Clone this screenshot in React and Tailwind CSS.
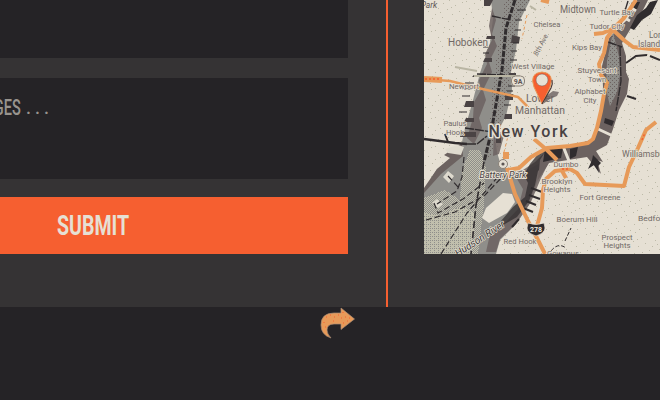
const labels = [
  // text, x (centre), y (baseline), size, width
  ["Hoboken", 468, 46, 11, 40],
  ["Midtown", 578, 13, 10, 36],
  ["Turtle Bay", 617, 15, 8, 35],
  ["Chelsea", 547, 27, 8, 27],
  ["Tudor City", 607, 29, 8, 35],
  ["Kips Bay", 587, 50, 8, 30],
  ["Long", 658, 38, 8.5, 18],
  ["Island", 649, 47, 8.5, 22],
  ["West Village", 533, 69, 8, 43],
  ["Stuyvesant", 597, 73, 8, 39],
  ["Town", 597, 82, 8, 18],
  ["Alphabet", 590, 94, 8, 31],
  ["City", 590, 103, 8, 13],
  ["Newport", 464, 89, 8, 30],
  ["Paulus", 455, 126, 7.5, 23],
  ["Hook", 455, 135, 7.5, 18],
  ["Lower", 540, 102, 10.5, 28],
  ["Manhattan", 540, 114, 10.5, 50],
  ["Williamsburg", 647, 157, 8.5, 50],
  ["Dumbo", 566, 167, 8, 25],
  ["Brooklyn", 557, 184, 8, 31],
  ["Heights", 557, 192, 8, 27],
  ["Fort Greene", 600, 200, 8, 41],
  ["Boerum Hill", 577, 222, 8, 41],
  ["Bedford", 653, 221, 8, 30],
  ["Prospect", 617, 240, 8, 31],
  ["Heights", 617, 248, 8, 27],
  ["Gowanus", 563, 256, 8, 32],
  ["Red Hook", 520, 244, 8, 33],
];

function CityMap() {
  return (
    <svg className="block h-[254px] w-[236px] shrink-0" viewBox="424 0 236 254" fontFamily="Roboto, sans-serif">
      <defs>
        <pattern id="grain" width="31" height="29" patternUnits="userSpaceOnUse">
          <path d="M1 1h1v1h-1zM9 3h1v1h-1zM4 8h1v1h-1zM15 0h1v1h-1zM21 5h1v1h-1zM28 2h1v1h-1zM13 9h1v1h-1zM25 11h1v1h-1zM1 14h1v1h-1zM8 17h1v1h-1zM18 14h1v1h-1zM29 18h1v1h-1zM14 21h1v1h-1zM22 20h1v1h-1zM4 23h1v1h-1zM10 27h1v1h-1zM19 26h1v1h-1zM27 25h1v1h-1zM17 7h1v1h-1zM6 12h1v1h-1z" fill="#bdbaa8" />
        </pattern>
        <pattern id="water" width="4" height="4" patternUnits="userSpaceOnUse">
          <path d="M0 0h1v1H0zM2 2h1v1H2z" fill="#6c6260" />
        </pattern>
        <pattern id="shore" width="2" height="2" patternUnits="userSpaceOnUse">
          <path d="M0 0h1v1H0zM1 1h1v1H1z" fill="#c1bfad" />
        </pattern>
        <pattern id="shallow" width="4" height="4" patternUnits="userSpaceOnUse">
          <path d="M0 0h4v4H0z" fill="#c1bfad" />
          <path d="M0 0h1v1H0zM2 2h1v1H2zM2 0h1v1H2z" fill="#8f8e8a" />
        </pattern>
      </defs>
      <rect x="424" width="236" height="254" fill="#e6e0d4" />
      <rect x="424" width="236" height="254" fill="url(#grain)" shapeRendering="crispEdges" />

      {/* Hudson river and the harbour */}
      <path d="M491 0H530L519 22L516 50L511 72L512 90L506 116L495 137L497 152L501 166L520 174L546 160L537 182L529 205L515 225L500 240L496 254H424V190L437 169L456 155L462 142L465 128L472 104L480 73L490 43L493 19Z" fill="#8f8e8a" />
      <path d="M424 198L445 190L460 200L462 170L470 150H480L486 168L484 205L478 254H424Z" fill="url(#shore)" shapeRendering="crispEdges" />
      <path d="M424 213L440 216L462 206L476 215L470 254H424Z" fill="url(#shallow)" shapeRendering="crispEdges" />
      <path d="M505 0H530L516 26L511 72L499 137L488 160L492 90Z" fill="url(#water)" shapeRendering="crispEdges" />
      <path d="M424 188L437 169L450 158L444 155L462 143L463 156L441 174L424 193Z" fill="#6c6260" />
      <path d="M492 8l4 12-4 14 5 12-8 16 3 10-9 18 3 10-7 18 3 10-8 16-7-6 6-20 1-16 7-12-2-10 8-16-2-10 7-14-3-14z" fill="#6c6260" opacity=".85" />
      <path d="M505 132l-6 22-6 2 1-24zM503 176l20-6 12-8 14-14 2 10-10 20-10 24-15 22-16 15-4 13-10 0 4-18 16-12 12-13 5-20-6-10z" fill="#6c6260" opacity=".85" />
      <path d="M530 164l8-10 13-7-3 14-10 10-3 14-6 16-12 16-14 8-2-4 12-14 12-10 3-14-4-8z" fill="#302c2e" opacity=".75" />
      <path d="M484 0h9l-3 6h-6zM487 36h8v3h-9zM485 58h7v4h-9zM474 75h10v2h-12zM466 101h8v6h-10zM466 118h8v4h-10zM461 132h15v5h-16zM512 35l8 2-1 6h-8zM509 73h7v4h-8zM505 94h8v6h-8zM505 114h7v5h-8zM496 134h5v9h-5z" fill="#4a4344" />

      {/* East river */}
      <path d="M648 0L641 14L631 28L622 43L626 56V72L629 79L627 94L619 110L613 129L607 145L596 151L603 162L597 160L601 174L587 157L568 160L549 163L538 180L540 160L547 149L571 146L594 139L601 117L603 87L602 66L609 38L628 19L637 0Z" fill="#6c6260" />
      <path d="M613 32L619 57L620 74L617 92L610 106L606 89L607 61Z" fill="#8f8e8a" />
      <path d="M613 32L619 57L620 74L617 92L610 106L606 89L607 61Z" fill="url(#water)" shapeRendering="crispEdges" />
      <path d="M632 2h8l-3 7-8 1zM650 2l8-2-7 14-9 6-8 10-4-2 7-13 9-7zM605 118l9 3-2 5-8-3zM545 149l18-1-2 10-18 4zM570 149l8-2-2 9-6 3zM593 155l8 8-3 3 1 7-5-8-6 4 4-9z" fill="#302c2e" />
      <path d="M630 7l6 4M623 17l7 4M598 129l15 7M563 146l6 15" stroke="#e6e0d4" strokeWidth="3" />

      {/* Governors, Liberty and Ellis islands */}
      <path d="M503 193l9 1 3 8-8 11-18 10-7-5 4-10z" fill="#e6e0d4" />
      <path d="M443 177l5-6 6 5-5 7zM432 203l5-4 6 5-5 4zM445 149l13-4 6 2-3 8-13-2z" fill="#dedace" />

      {/* Boundaries, ferries and tunnels */}
      <g fill="none" stroke="#302c2e">
        <path d="M515 0L506 28L502 70L491 133L484 162" strokeWidth="3" strokeDasharray="6 1.5" />
        <path d="M484 162L476 205L471 254" strokeWidth="1.6" strokeDasharray="7 3" />
        <path d="M424 139l31 4 12 1" strokeWidth="2.6" />
        <path d="M492 16l19 4M477 74l28 1M467 144l10 0 10-8M465 128l28 4M628 1l-8 26M608 42l14 5M620 47l1 34-5 30" strokeWidth="1.4" strokeDasharray="9 1" />
        <path d="M426 220L455 212L485 195L506 173M464 157l-2 20-5 14-20 13M441 254l26-41 35-41M448 176l11 12M434 203l4 10 25-14 21-16" strokeWidth="1.2" strokeDasharray="6 3" />
        <path d="M626 63l10-7 11-1M650 56l10 4M627 96l9 3M445 134l3 8" strokeWidth="2" />
        <path d="M531 188l11 4M529 195l11 4M526 201l10 4M523 208l10 4M512 227l7-8" strokeWidth="2" />
        <path d="M517 10h9M515 20h7M515 30h6M513 43h6M511 51h6M510 60h7M508 86h7M507 91h6M504 105h7M474 83h-9M472 89h-8M470 96h-8M467 112h-8M488 47h-5M489 53h-6" strokeWidth="1" />
        <path d="M551 251q7-9 15-3M565 241l6-13" strokeWidth="1" strokeDasharray="4 2" />
      </g>
      <path d="M474 76h46M455 67l22 4M530 6l6 4" stroke="#b9b5a3" strokeWidth="2" fill="none" />

      {/* Main roads */}
      <g className="fill-none stroke-[#e79a59]" strokeWidth="4" strokeLinejoin="round">
        <path d="M424 79L450 81L478 88L518 97L527 106" strokeWidth="2.5" />
        <path d="M424 79l18 1" strokeWidth="6" />
        <path d="M636 0L624 18L614 28L607 38L604 53L599 64L601 75L607 83L604 94L601 111L597 128L593 139L588 143L570 146L547 148L531 157L519 168L508 170" />
        <path d="M594 34l9-1 9-4 13 12 8 6 27 3M541 0l8 2" />
        <path d="M507 168L515 194L528 221L539 242L545 254M537 226L542 208L543 190L546 179L555 171L570 169L577 173L585 184L624 186L629 167L638 148L646 130L656 122M534 139l13 11 10 10" />
        <path d="M561 169l5 9" />
      </g>
      <path d="M519 97l10 10M509 132l-5 20M527 15l-5 24" stroke="#e79a59" strokeWidth="1" strokeDasharray="3 3" />
      <path d="M506 152v7" stroke="#e79a59" strokeWidth="6" />
      <circle cx="503" cy="164" r="4.5" fill="#e6e0d4" stroke="#8b8278" />
      <circle cx="503" cy="164" r="1.6" fill="#5d5654" />
      <path d="M425 79h14M642 140l3-7M562 169h8" stroke="#f65f30" strokeWidth="1.5" strokeDasharray="2 2" />

      <g fill="#716965" textAnchor="middle" stroke="#e6e0d4" strokeWidth="1.4" paintOrder="stroke" strokeLinejoin="round">
        {labels.map(([text, x, y, size, width]) => (
          <text key={text + y} x={x} y={y} fontSize={size} textLength={width} lengthAdjust="spacingAndGlyphs">{text}</text>
        ))}
        <text x="429" y="8" fontSize="8.5" fontStyle="italic" fill="#5d5654">Park</text>
        <text x="541" y="47" fontSize="7" transform="rotate(-62 541 45)">8th Ave</text>
        <text x="503" y="178" fontSize="8.5" fontStyle="italic" fill="#4b4445" strokeWidth="2" textLength="47" lengthAdjust="spacingAndGlyphs">Battery Park</text>
        <text x="480" y="242" fontSize="10" fontStyle="italic" fill="#3b3637" textLength="57" lengthAdjust="spacingAndGlyphs" transform="rotate(-33 480 239)">Hudson River</text>
        <text x="528" y="137" fontSize="16" fontWeight="500" fill="#484243" strokeWidth="3" textLength="79">New York</text>
      </g>

      <rect x="511.500" y="76" width="13" height="10" rx="4" fill="#e6e0d4" stroke="#8b8278" />
      <text x="518" y="84" fontSize="7" fontWeight="700" textAnchor="middle" fill="#5d5654">9A</text>
      <path d="M528 223q8 3 16 0l1 5q0 5-9 8q-9-3-9-8z" fill="#302c2e" stroke="#e6e0d4" strokeWidth=".7" />
      <text x="536" y="232" fontSize="7" fontWeight="700" textAnchor="middle" fill="#f4eee2">278</text>

      <path d="M543 104l3-8 7-5 6 1-2 4-7 3z" fill="#6c6260" opacity=".8" />
      <path d="M542 104L534 87q-5-14 8-15q13 1 8 15Z" fill="#f65f30" stroke="#e79a59" strokeWidth="1" />
      <path d="M542 104L551 88q2-4 1-8" fill="none" stroke="#4a3937" strokeWidth="1.2" />
      <circle cx="542" cy="80" r="6" fill="#e6e0d4" stroke="#6c6260" strokeWidth=".5" />
    </svg>
  );
}

export default function App() {
  return (
    <div className="flex h-[400px] w-[660px] flex-col overflow-hidden bg-[#252326] font-['Roboto',sans-serif]">
      <main className="flex h-[307px] shrink-0 bg-[#353334]">
        <form className="flex w-[348px] shrink-0 flex-col">
          <div className="h-[58px] shrink-0 bg-[#252326]" />
          <div className="mt-5 h-[101px] shrink-0 bg-[#252326] pt-[18px]">
            <div className="flex w-[49px] justify-end text-[22px] leading-6 font-medium text-[#99948e]">
              <span className="-mr-0.5 origin-right scale-x-[.66]">GES</span>
              <span className="ml-[7px] flex w-[23px] shrink-0 justify-between text-[18px]">
                <span>.</span>
                <span>.</span>
                <span>.</span>
              </span>
            </div>
          </div>
          <button type="button" className="mt-[18px] flex h-[57px] shrink-0 items-center bg-[#f65f30] pt-0.5 pl-[56.5px]">
            <span className="origin-left scale-x-[.725] text-[27px] leading-none font-bold text-[#e6e0d4]">SUBMIT</span>
          </button>
        </form>
        <div className="ml-[38px] w-0.5 shrink-0 bg-[#f65f30]" />
        <section className="ml-9">
          <CityMap />
        </section>
      </main>
      <footer className="pl-[320px]">
        <svg className="block h-8 w-9" viewBox="320 307 36 32">
          <path d="M341 308L354.500 319L341 329.500V324H334Q327 324 327 330Q327 334 331 338Q321 335 321 325Q321 313 334 313H341Z" fill="#e79a59" stroke="#a98c75" strokeWidth=".7" />
          <path d="M324 322v1M326 317h1M330 315h1M334 317h1M338 315h1M343 312v1M345 317h1M349 318h1M347 321h1M343 323h1M333 321h1M341 318h1M325 327h1" stroke="#f65f30" />
        </svg>
      </footer>
    </div>
  );
}
